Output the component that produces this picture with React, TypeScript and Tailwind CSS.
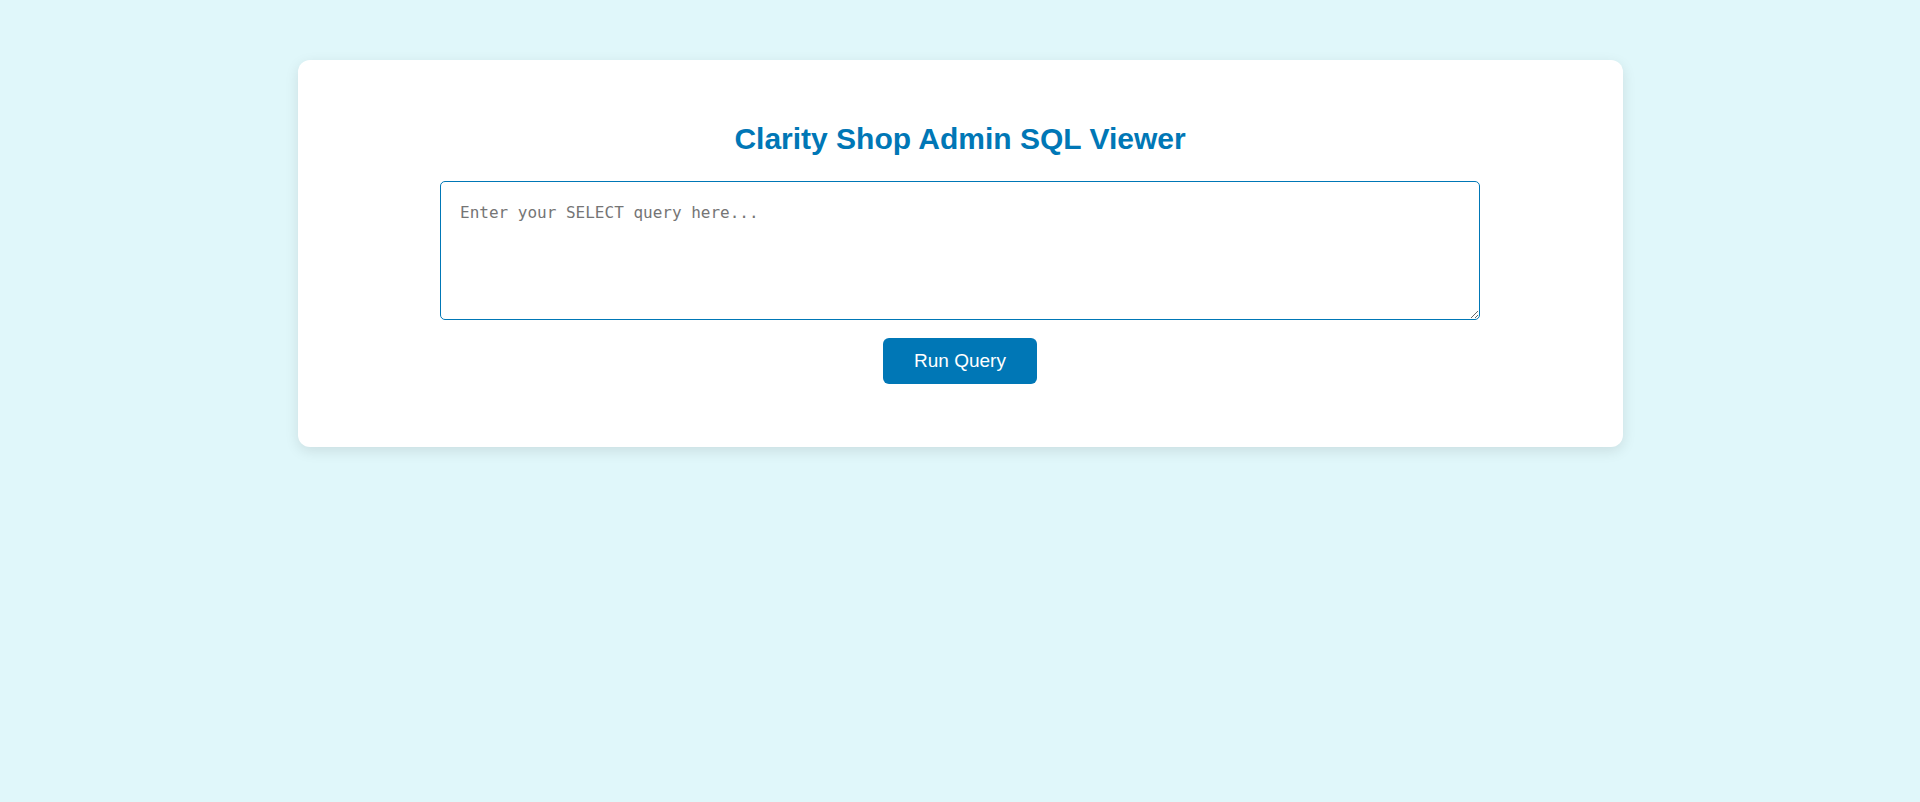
export default function App() {
  return (
    <div className="min-h-[802px] w-full bg-[#e0f7fa] pt-[60px] font-['Liberation_Sans',Arial,sans-serif]">
      {/* Card */}
      <div className="mx-auto flex w-[1325px] flex-col items-center rounded-[12px] bg-white pt-[61px] pb-[63px] shadow-[0_4px_14px_rgba(0,0,0,0.1)]">
        <h1 className="mb-[24px] text-[30px] leading-[36px] font-bold text-[#0077b6]">
          Clarity Shop Admin SQL Viewer
        </h1>

        <textarea
          placeholder="Enter your SELECT query here..."
          className="block h-[139px] w-[1040px] rounded-[5px] border border-[#0077b6] bg-white px-[19px] pt-[21px] pb-[16px] font-['DejaVu_Sans_Mono','Liberation_Mono',monospace] text-[16px] leading-[20px] text-gray-800 outline-none placeholder:text-[#757575]"
        />

        <button className="mt-[18px] h-[46px] rounded-[6px] bg-[#0077b6] px-[31px] text-[19px] text-white">
          Run Query
        </button>
      </div>
    </div>
  );
}
